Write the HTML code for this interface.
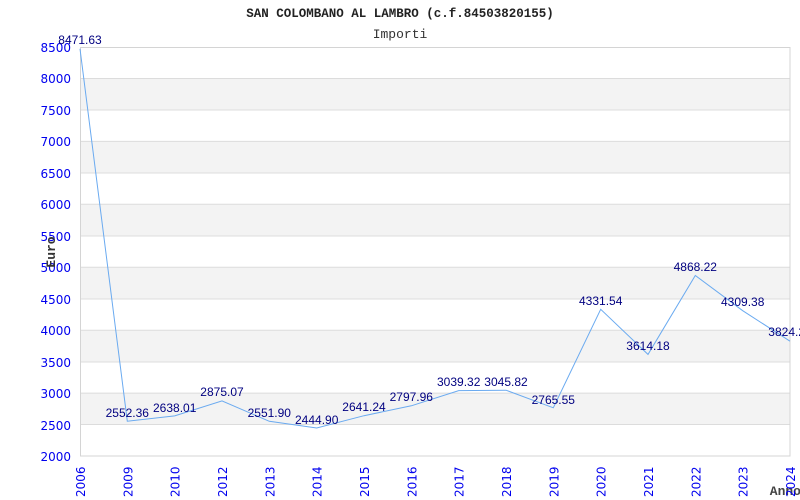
<!DOCTYPE html>
<html><head><meta charset="utf-8"><style>body{margin:0;background:#fff}svg{display:block}</style></head><body>
<svg width="800" height="500" xmlns="http://www.w3.org/2000/svg">
<rect width="800" height="500" fill="#fff"/>
<g fill="#f3f3f3">
<rect x="80" y="78.5" width="710" height="31.5"/>
<rect x="80" y="141.4" width="710" height="31.5"/>
<rect x="80" y="204.3" width="710" height="31.5"/>
<rect x="80" y="267.3" width="710" height="31.5"/>
<rect x="80" y="330.2" width="710" height="31.5"/>
<rect x="80" y="393.1" width="710" height="31.5"/>
</g>
<g stroke="#dcdcdc" stroke-width="1">
<line x1="80" x2="790" y1="78.5" y2="78.5"/><line x1="80" x2="790" y1="110" y2="110"/>
<line x1="80" x2="790" y1="141.4" y2="141.4"/><line x1="80" x2="790" y1="173" y2="173"/>
<line x1="80" x2="790" y1="204.3" y2="204.3"/><line x1="80" x2="790" y1="236" y2="236"/>
<line x1="80" x2="790" y1="267.3" y2="267.3"/><line x1="80" x2="790" y1="299" y2="299"/>
<line x1="80" x2="790" y1="330.2" y2="330.2"/><line x1="80" x2="790" y1="362" y2="362"/>
<line x1="80" x2="790" y1="393.1" y2="393.1"/><line x1="80" x2="790" y1="424.5" y2="424.5"/>
</g>
<rect x="80.5" y="47.5" width="709.5" height="408.5" fill="none" stroke="#d4d4d4"/>
<text x="400" y="17" text-anchor="middle" font-family="Liberation Mono, monospace" font-weight="bold" font-size="12.5" fill="#222">SAN COLOMBANO AL LAMBRO (c.f.84503820155)</text>
<text x="400" y="38" text-anchor="middle" font-family="Liberation Mono, monospace" font-size="13" fill="#333">Importi</text>
<g font-family="DejaVu Sans, sans-serif" font-size="12" fill="#0000ee" text-anchor="end">
<text x="71" y="52">8500</text><text x="71" y="83">8000</text><text x="71" y="115">7500</text>
<text x="71" y="146">7000</text><text x="71" y="178">6500</text><text x="71" y="209">6000</text>
<text x="71" y="241">5500</text><text x="71" y="272">5000</text><text x="71" y="304">4500</text>
<text x="71" y="335">4000</text><text x="71" y="367">3500</text><text x="71" y="398">3000</text>
<text x="71" y="430">2500</text><text x="71" y="461">2000</text>
</g>
<text transform="translate(55,252) rotate(-90)" text-anchor="middle" font-family="Liberation Mono, monospace" font-weight="bold" font-size="13" fill="#333">Euro</text>
<text x="801" y="495" text-anchor="end" font-family="Liberation Mono, monospace" font-weight="bold" font-size="13" fill="#444">Anno</text>
<g font-family="DejaVu Sans, sans-serif" font-size="12" fill="#0000ee">
<text transform="translate(85,497) rotate(-90)">2006</text>
<text transform="translate(132.3,497) rotate(-90)">2009</text>
<text transform="translate(179.7,497) rotate(-90)">2010</text>
<text transform="translate(227,497) rotate(-90)">2012</text>
<text transform="translate(274.3,497) rotate(-90)">2013</text>
<text transform="translate(321.7,497) rotate(-90)">2014</text>
<text transform="translate(369,497) rotate(-90)">2015</text>
<text transform="translate(416.3,497) rotate(-90)">2016</text>
<text transform="translate(463.7,497) rotate(-90)">2017</text>
<text transform="translate(511,497) rotate(-90)">2018</text>
<text transform="translate(558.3,497) rotate(-90)">2019</text>
<text transform="translate(605.7,497) rotate(-90)">2020</text>
<text transform="translate(653,497) rotate(-90)">2021</text>
<text transform="translate(700.3,497) rotate(-90)">2022</text>
<text transform="translate(747.7,497) rotate(-90)">2023</text>
<text transform="translate(795,497) rotate(-90)">2024</text>
</g>
<polyline fill="none" stroke="#6aaaf0" stroke-width="1" points="80,48.8 127.3,421.2 174.7,415.9 222,400.9 269.3,421.3 316.7,428 364,415.7 411.3,405.8 458.7,390.6 506,390.2 553.3,407.8 600.7,309.3 648,354.4 695.3,275.5 742.7,310.7 790,341.2"/>
<g font-family="Liberation Sans, sans-serif" font-size="12" fill="#000080" text-anchor="middle">
<text x="80" y="44">8471.63</text>
<text x="127.3" y="417">2552.36</text>
<text x="174.7" y="412">2638.01</text>
<text x="222" y="396">2875.07</text>
<text x="269.3" y="417">2551.90</text>
<text x="316.7" y="424">2444.90</text>
<text x="364" y="411">2641.24</text>
<text x="411.3" y="401">2797.96</text>
<text x="458.7" y="386">3039.32</text>
<text x="506" y="386">3045.82</text>
<text x="553.3" y="404">2765.55</text>
<text x="600.7" y="305">4331.54</text>
<text x="648" y="350">3614.18</text>
<text x="695.3" y="271">4868.22</text>
<text x="742.7" y="306">4309.38</text>
<text x="790" y="336">3824.20</text>
</g>
</svg>
</body></html>
